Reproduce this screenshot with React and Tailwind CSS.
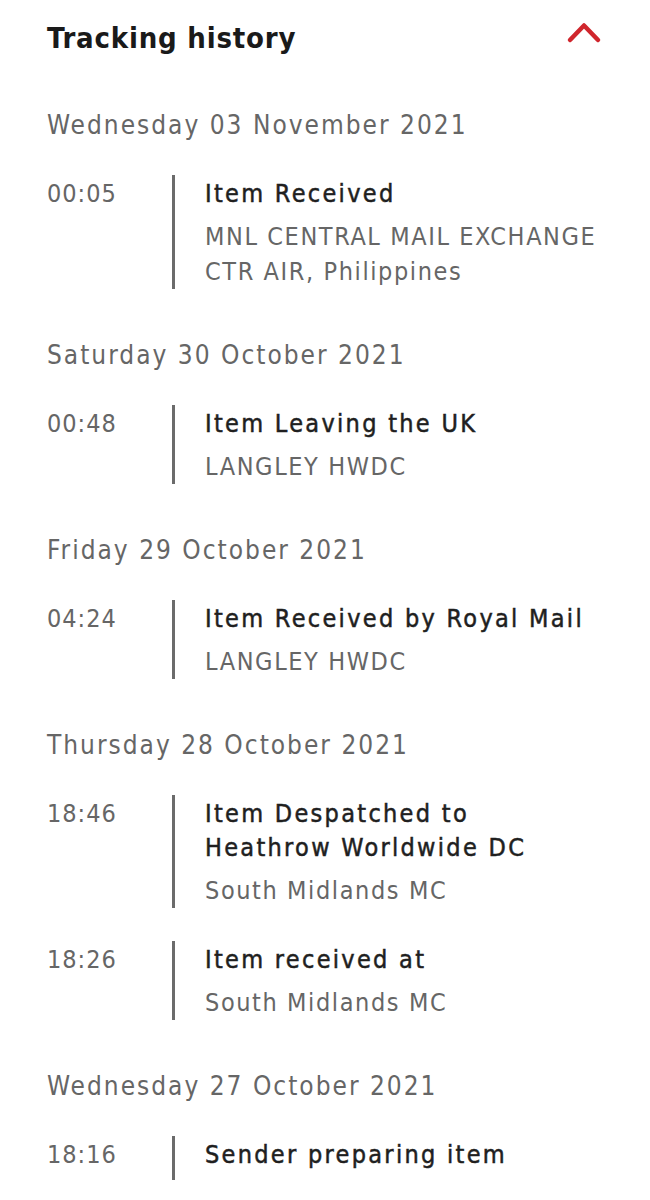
import React from "react";

const days = [
  {
    date: "Wednesday 03 November 2021",
    entries: [
      { time: "00:05", title: ["Item Received"], sub: ["MNL CENTRAL MAIL EXCHANGE", "CTR AIR, Philippines"] },
    ],
  },
  {
    date: "Saturday 30 October 2021",
    entries: [{ time: "00:48", title: ["Item Leaving the UK"], sub: ["LANGLEY HWDC"] }],
  },
  {
    date: "Friday 29 October 2021",
    entries: [{ time: "04:24", title: ["Item Received by Royal Mail"], sub: ["LANGLEY HWDC"] }],
  },
  {
    date: "Thursday 28 October 2021",
    entries: [
      { time: "18:46", title: ["Item Despatched to", "Heathrow Worldwide DC"], sub: ["South Midlands MC"] },
      { time: "18:26", title: ["Item received at"], sub: ["South Midlands MC"] },
    ],
  },
  {
    date: "Wednesday 27 October 2021",
    entries: [{ time: "18:16", title: ["Sender preparing item"], sub: [] }],
  },
];

function Entry({ e }) {
  return (
    <div className="mt-[33px] flex">
      <div className="w-[125px] shrink-0 pt-[2px] text-[25px] leading-[34px] tracking-[1px] text-[#666666]">
        {e.time}
      </div>
      <div className={`border-l-[3px] border-[#6b6b6b] pl-[30px] pt-[2px] ${e.sub.length ? "" : "pb-[8px]"}`}>
        {e.title.map((t) => (
          <div key={t} className="whitespace-nowrap text-[25px] leading-[34px] tracking-[2.3px] text-[#1f1f1f] [-webkit-text-stroke:0.5px_#1f1f1f]">
            {t}
          </div>
        ))}
        {e.sub.length > 0 && (
          <div className="mt-[8px]">
            {e.sub.map((s) => (
              <div key={s} className="whitespace-nowrap text-[25px] leading-[35px] tracking-[1.6px] text-[#666666]">
                {s}
              </div>
            ))}
          </div>
        )}
      </div>
    </div>
  );
}

export default function App() {
  return (
    <div
      className="min-h-[1200px] w-[650px] bg-white pl-[47px] pr-[48px] pt-[20px]"
      style={{ fontFamily: '"DejaVu Sans Condensed", "DejaVu Sans", sans-serif' }}
    >
      <div className="flex items-start justify-between">
        <h2 className="text-[29px] font-bold leading-[36px] tracking-[0.8px] text-[#1a1a1a]">Tracking history</h2>
        <svg width="36" height="24" viewBox="0 0 36 24" className="mt-[1px]" fill="none">
          <polyline points="4,19 18,4.5 32,19" stroke="#d0262d" strokeWidth="4.5" strokeLinecap="round" strokeLinejoin="round" />
        </svg>
      </div>
      <div className="mt-[52px]">
        {days.map((d, i) => (
          <div key={d.date} className={i === 0 ? "" : "mt-[49px]"}>
            <div className="text-[26px] leading-[34px] tracking-[2px] text-[#666666]">{d.date}</div>
            {d.entries.map((e) => (
              <Entry key={e.time} e={e} />
            ))}
          </div>
        ))}
      </div>
    </div>
  );
}
